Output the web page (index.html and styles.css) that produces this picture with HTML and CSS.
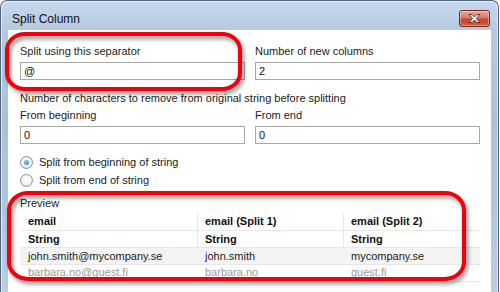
FILE: index.html
```html
<!DOCTYPE html>
<html>
<head>
<meta charset="utf-8">
<link rel="stylesheet" href="styles.css">
</head>
<body>
<div class="stage">
  <div class="window">
    <div class="titlebar">
      <span class="title">Split Column</span>
      <button class="close" aria-label="Close">
        <svg width="15" height="11" viewBox="0 0 15 11">
          <path d="M2 1.5 L5 1.5 L7.5 4 L10 1.5 L13 1.5 L9.2 5.5 L13 9.5 L10 9.5 L7.5 7 L5 9.5 L2 9.5 L5.8 5.5 Z" fill="#fff" stroke="#5a2a22" stroke-width="0.9" stroke-linejoin="round"/>
        </svg>
      </button>
    </div>
    <div class="client">
      <div class="grid">
        <div class="field">
          <label class="lbl">Split using this separator</label>
          <div class="input">@</div>
        </div>
        <div class="field">
          <label class="lbl">Number of new columns</label>
          <div class="input">2</div>
        </div>
      </div>
      <div class="lbl remove">Number of characters to remove from original string before splitting</div>
      <div class="grid grid2">
        <div class="field">
          <label class="lbl">From beginning</label>
          <div class="input">0</div>
        </div>
        <div class="field">
          <label class="lbl">From end</label>
          <div class="input">0</div>
        </div>
      </div>
      <div class="radios">
        <div class="radio-row"><span class="radio checked"></span><span class="lbl">Split from beginning of string</span></div>
        <div class="radio-row"><span class="radio"></span><span class="lbl">Split from end of string</span></div>
      </div>
      <div class="lbl preview-lbl">Preview</div>
      <div class="table">
        <div class="row head">
          <div class="cell c1">email</div>
          <div class="cell c2">email (Split 1)</div>
          <div class="cell c3">email (Split 2)</div>
        </div>
        <div class="row head type">
          <div class="cell c1">String</div>
          <div class="cell c2">String</div>
          <div class="cell c3">String</div>
        </div>
        <div class="row data alt">
          <div class="cell c1">john.smith@mycompany.se</div>
          <div class="cell c2">john.smith</div>
          <div class="cell c3">mycompany.se</div>
        </div>
        <div class="row data dim">
          <div class="cell c1">barbara.no@guest.fi</div>
          <div class="cell c2">barbara.no</div>
          <div class="cell c3">guest.fi</div>
        </div>
      </div>
    </div>
  </div>
  <div class="ring ring1"></div>
  <div class="ring ring2"></div>
</div>
</body>
</html>
```

FILE: styles.css
```css
html, body {
  margin: 0;
  padding: 0;
}
body {
  width: 500px;
  height: 292px;
  overflow: hidden;
  background: #ffffff;
  font-family: "Liberation Sans", Arial, sans-serif;
  font-size: 11px;
  color: #1b1b1b;
}
.stage {
  position: relative;
  width: 500px;
  height: 292px;
  overflow: hidden;
}
.window {
  box-sizing: border-box;
  width: 499px;
  height: 292px;
  border: 1px solid #54657a;
  border-bottom: 0;
  border-radius: 7px 7px 0 0;
  background: linear-gradient(to bottom, #c6d8ec 0px, #b4cae3 30px, #a9c1dd 120px, #b9cde4 292px);
  padding: 0 7px;
  display: flex;
  flex-direction: column;
  box-shadow: inset 1px 1px 0 rgba(255,255,255,0.6), inset -1px 0 0 rgba(255,255,255,0.5);
}
.titlebar {
  height: 29px;
  flex: none;
  display: flex;
  align-items: flex-start;
  padding-left: 4px;
}
.title {
  font-size: 12px;
  color: #111;
  margin-top: 11px;
  line-height: 14px;
}
.close {
  margin-left: auto;
  margin-right: 1px;
  margin-top: 9px;
  width: 31px;
  height: 17px;
  padding: 0;
  border: 1px solid #6e2a20;
  border-radius: 3px;
  background: linear-gradient(to bottom, #e9a99b 0%, #d77a68 45%, #c2452f 55%, #cf5b3e 100%);
  box-shadow: inset 0 0 0 1px rgba(255,255,255,0.35);
  display: flex;
  align-items: center;
  justify-content: center;
}
.close svg { display: block; }
.client {
  flex: 1;
  min-height: 0;
  overflow: hidden;
  background: #fff;
  padding: 15px 11px 0 12px;
}
.grid {
  display: grid;
  grid-template-columns: 1fr 1fr;
  column-gap: 10px;
}
.lbl {
  display: block;
  line-height: 13px;
  height: 13px;
  white-space: nowrap;
}
.field .lbl {
  margin-bottom: 4px;
}
.input {
  box-sizing: border-box;
  height: 18px;
  border: 1px solid #a7a7a7;
  padding: 0 3px;
  line-height: 16px;
  font-size: 11px;
  color: #111;
}
.remove {
  margin-top: 12px;
  margin-bottom: 4px;
}
.radios {
  margin-top: 9px;
}
.radio-row {
  display: flex;
  align-items: center;
  height: 18px;
  gap: 6px;
}
.radio {
  box-sizing: border-box;
  width: 13px;
  height: 13px;
  border-radius: 50%;
  border: 1px solid #8f9092;
  background: radial-gradient(circle at 50% 40%, #ffffff 0%, #f2f2f2 55%, #d9d9d9 100%);
  display: flex;
  align-items: center;
  justify-content: center;
}
.radio.checked::after {
  content: "";
  width: 5px;
  height: 5px;
  border-radius: 50%;
  background: radial-gradient(circle at 40% 35%, #8ccaf6, #1f7fd0);
}
.preview-lbl {
  margin-top: 8px;
}
.table {
  margin-top: 3px;
}
.row {
  display: grid;
  grid-template-columns: 177px 146px 1fr;
  height: 16px;
  border-bottom: 1px solid #e7e7e7;
}
.row.head:first-child {
  height: 17px;
}
.cell {
  padding-left: 8px;
  line-height: 17px;
  white-space: nowrap;
}
.head .cell {
  font-weight: bold;
  color: #111;
}
.head .c2, .head .c3 {
  border-left: 1px solid #e7e7e7;
  padding-left: 7px;
}
.data .cell {
  line-height: 16px;
}
.data.dim .cell {
  line-height: 14px;
}
.alt {
  background: #f4f4f4;
}
.dim .cell {
  color: #9a9a9a;
}
.ring {
  position: absolute;
  box-sizing: border-box;
  border: 4px solid #f0000c;
  filter: drop-shadow(2px 3px 2px rgba(0,0,0,0.45));
}
.ring1 {
  left: 5px;
  top: 32px;
  width: 237px;
  height: 59px;
  border-radius: 20px / 18px;
}
.ring2 {
  left: 7px;
  top: 191px;
  width: 459px;
  height: 90px;
  border-radius: 21px / 19px;
}
```
